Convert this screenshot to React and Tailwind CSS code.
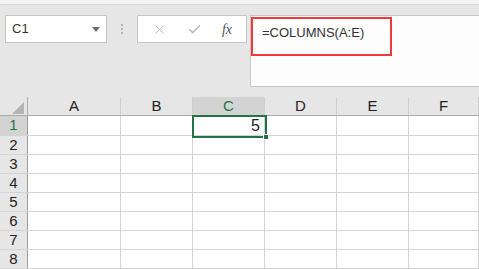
import { X, Check } from "lucide-react";

const cols = [
  { id: "A", w: "w-[93px]" },
  { id: "B", w: "w-[72px]" },
  { id: "C", w: "w-[72px]" },
  { id: "D", w: "w-[72px]" },
  { id: "E", w: "w-[72px]" },
  { id: "F", w: "flex-1" },
];
const rows = [1, 2, 3, 4, 5, 6, 7, 8];

export default function App() {
  return (
    <div className="w-[479px] h-[269px] overflow-hidden bg-[#e6e6e6] font-['Liberation_Sans',sans-serif] text-[#222]">
      {/* top edge */}
      <div className="h-[5px] bg-[#f3f3f3] border-b border-[#d6d6d6]" />

      {/* formula row */}
      <div className="flex items-start pt-[10px] pl-[5px] h-[92px]">
        <div className="w-[102px] h-[28px] bg-white border border-[#c6c6c6] flex items-center justify-between pl-[6px] pr-[6px]">
          <span className="text-[13px] text-[#333]">C1</span>
          <svg width="8" height="5" viewBox="0 0 8 5">
            <path d="M0 0h8L4 5z" fill="#6b6b6b" />
          </svg>
        </div>
        <div className="w-[30px] h-[28px] flex flex-col items-center justify-center gap-[2px]">
          <span className="w-[2px] h-[2px] bg-[#b5b5b5]" />
          <span className="w-[2px] h-[2px] bg-[#b5b5b5]" />
          <span className="w-[2px] h-[2px] bg-[#b5b5b5]" />
        </div>
        <div className="w-[110px] h-[28px] bg-white border border-[#c6c6c6] flex items-center justify-around px-[4px]">
          <X size={15} strokeWidth={1.6} color="#bdbdbd" />
          <Check size={15} strokeWidth={2.4} color="#bdbdbd" />
          <span className="font-['Liberation_Serif',serif] italic text-[14px] text-[#555]">
            fx
          </span>
        </div>
        <div className="ml-[3px] flex-1 h-[72px] bg-[#fdfdfd] border border-[#c6c6c6] border-r-0 pt-[1px]">
          <div className="w-[141px] h-[39px] border-2 border-[#f23a3a] pl-[9px] pt-[4px] text-[13px] text-[#333]">
            =COLUMNS(A:E)
          </div>
        </div>
      </div>

      {/* grid */}
      <div className="relative bg-white">
        {/* header row */}
        <div className="flex h-[19px] bg-[#e6e6e6] border-b border-[#ababab]">
          <div className="w-[28px] border-r border-[#ababab] flex items-end justify-end pr-[3px] pb-[1px]">
            <svg width="12" height="12" viewBox="0 0 12 12">
              <path d="M12 0V12H0z" fill="#b4b4b4" />
            </svg>
          </div>
          {cols.map((c) => (
            <div
              key={c.id}
              className={`${c.w} border-r border-[#cfcfcf] flex items-center justify-center text-[15px] ${
                c.id === "C" ? "bg-[#d3d3d3] text-[#217346]" : ""
              }`}
            >
              {c.id}
            </div>
          ))}
        </div>

        {rows.map((r) => (
          <div
            key={r}
            className={`flex border-b border-[#d4d4d4] ${r === 1 ? "h-[20px]" : "h-[19px]"}`}
          >
            <div
              className={`w-[28px] border-r border-[#9e9e9e] flex items-center justify-center text-[15px] ${
                r === 1 ? "bg-[#d3d3d3] text-[#217346]" : "bg-[#e6e6e6]"
              }`}
            >
              {r}
            </div>
            {cols.map((c) => (
              <div
                key={c.id}
                className={`${c.w} border-r border-[#d4d4d4] flex items-center justify-end pr-[4px] text-[16px]`}
              >
                {r === 1 && c.id === "C" ? "5" : ""}
              </div>
            ))}
          </div>
        ))}

        {/* active cell */}
        <div className="absolute left-[192px] top-[18px] w-[75px] h-[23px] border-2 border-[#217346] pointer-events-none" />
        <div className="absolute left-[263px] top-[37px] w-[6px] h-[6px] bg-[#217346] border border-white" />
      </div>
    </div>
  );
}
